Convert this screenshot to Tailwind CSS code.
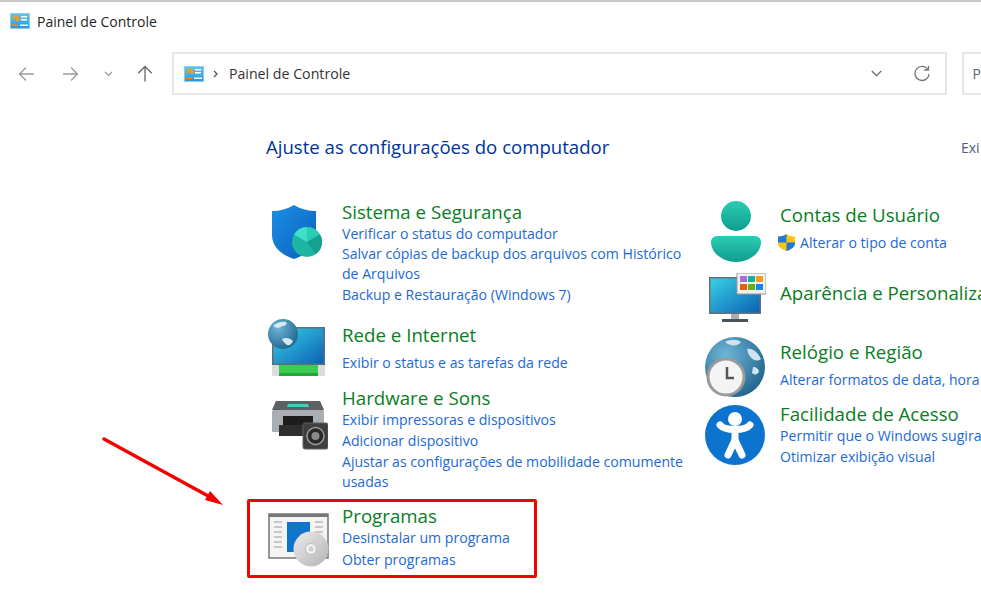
<!DOCTYPE html>
<html lang="pt-BR">
<head>
  <meta charset="UTF-8" />
  <title>Painel de Controle</title>
  <script src="https://cdn.jsdelivr.net/npm/@tailwindcss/browser@4"></script>
</head>
<body class="relative h-[598px] w-[981px] overflow-hidden bg-white font-['Open_Sans','Noto_Sans',sans-serif] text-[#1f1f1f]">

  <!-- hidden defs shared by the icons -->
  <svg width="0" height="0" class="absolute">
    <defs>
      <linearGradient id="cpBlue" x1="0" y1="0" x2="0" y2="1"><stop offset="0" stop-color="#5cc8f0"/><stop offset="1" stop-color="#2a94dc"/></linearGradient>
      <linearGradient id="shield" x1="0" y1="0" x2="1" y2="1"><stop offset="0" stop-color="#1b8fe6"/><stop offset="1" stop-color="#0a5fb8"/></linearGradient>
      <linearGradient id="screen" x1="0" y1="0" x2="1" y2="1"><stop offset="0" stop-color="#38d0e6"/><stop offset="1" stop-color="#0b62b4"/></linearGradient>
      <linearGradient id="teal" x1="0" y1="0" x2="0" y2="1"><stop offset="0" stop-color="#2bcdb4"/><stop offset="1" stop-color="#0f9c8e"/></linearGradient>
      <radialGradient id="globe" cx="0.35" cy="0.3" r="0.8"><stop offset="0" stop-color="#6fb6d8"/><stop offset="1" stop-color="#1d5f88"/></radialGradient>
      <linearGradient id="disc" x1="0" y1="0" x2="1" y2="1"><stop offset="0" stop-color="#ececec"/><stop offset="1" stop-color="#b4b4b4"/></linearGradient>
      <symbol id="cpIcon" viewBox="0 0 20 16">
        <rect x="0.5" y="0.5" width="19" height="15" fill="url(#cpBlue)" stroke="#8ccdee"/>
        <path d="M3 8a3.500 3.500 0 1 1 6 0H6V4.500z" fill="#f0a020"/>
        <rect x="11" y="3" width="6" height="1.500" fill="#fff"/>
        <rect x="11" y="6" width="6" height="1.500" fill="#fff"/>
        <rect x="2" y="11.500" width="6" height="1.500" fill="#f08a20"/>
        <rect x="10" y="11.500" width="8" height="1.500" fill="#fff"/>
      </symbol>
    </defs>
  </svg>

  <div class="h-[2px] bg-[#c8c8c8]"></div>

  <!-- title bar -->
  <div class="flex h-[38px] items-center gap-[7px] pl-[10px]">
    <svg class="h-[16px] w-[20px]"><use href="#cpIcon"/></svg>
    <span class="text-[14px]">Painel de Controle</span>
  </div>

  <!-- toolbar -->
  <div class="flex h-[43px] items-center mt-[12px]">
    <div class="flex w-[172px] items-center text-[#9a9a9a]">
      <svg class="ml-[18px] h-[16px] w-[17px]" viewBox="0 0 17 16" fill="none" stroke="currentColor" stroke-width="1.300"><path d="M16 8H1.500M8 1.500 1.500 8 8 14.500"/></svg>
      <svg class="ml-[27px] h-[16px] w-[17px]" viewBox="0 0 17 16" fill="none" stroke="currentColor" stroke-width="1.300"><path d="M1 8h14.500M9 1.500 15.500 8 9 14.500"/></svg>
      <svg class="ml-[25px] h-[6px] w-[9px]" viewBox="0 0 9 6" fill="none" stroke="currentColor" stroke-width="1.200"><path d="M1 1l3.500 3.500L8 1"/></svg>
      <svg class="ml-[24px] h-[17px] w-[16px] text-[#666]" viewBox="0 0 16 17" fill="none" stroke="currentColor" stroke-width="1.300"><path d="M8 16.500V1.500M1.200 8.300 8 1.500l6.800 6.800"/></svg>
    </div>
    <div class="flex h-[43px] w-[775px] items-center border-2 border-[#e6e6e6] pl-[10px]">
      <svg class="h-[16px] w-[20px]"><use href="#cpIcon"/></svg>
      <svg class="ml-[9px] h-[8px] w-[5px] text-[#555]" viewBox="0 0 5 8" fill="none" stroke="currentColor" stroke-width="1.300"><path d="M1 1l3 3-3 3"/></svg>
      <span class="ml-[11px] text-[14.200px] text-[#333]">Painel de Controle</span>
      <svg class="ml-auto h-[7px] w-[11px] text-[#666]" viewBox="0 0 11 7" fill="none" stroke="currentColor" stroke-width="1.200"><path d="M.8 1l4.700 4.700L10.200 1"/></svg>
      <svg class="ml-[32px] mr-[15px] h-[17px] w-[16px] text-[#777]" viewBox="0 0 16 17" fill="none" stroke="currentColor" stroke-width="1.300"><path d="M13.800 4.500A7 7 0 1 0 15 9M14.500 .8v4.200h-4.300"/></svg>
    </div>
    <div class="ml-[15px] flex h-[43px] flex-1 items-center border-y-2 border-l-2 border-[#e6e6e6] pl-[9px] text-[14px] text-[#666]">P</div>
  </div>

  <!-- page heading -->
  <div class="mt-[38px] flex h-[28px] items-center">
    <h1 class="ml-[266px] text-[18.600px] whitespace-nowrap text-[#003399]">Ajuste as configurações do computador</h1>
    <span class="ml-auto w-[20px] overflow-hidden text-[14px] text-[#4c5a80]">Exi</span>
  </div>

  <!-- categories -->
  <div class="mt-[40px] flex">
    <div class="ml-[266px] w-[439px] shrink-0">

      <div class="flex h-[122px]">
        <svg class="mt-[3px] ml-[4px] h-[56px] w-[52px] shrink-0" viewBox="0 0 52 56">
          <path d="M2 7C10 7 17 5 24 1c7 4 14 6 22 6v24C46 43 36 51 24 55 12 51 2 43 2 31z" fill="url(#shield)"/>
          <circle cx="37" cy="38" r="15" fill="#1fb5a4"/>
          <path d="M37 38V23a15 15 0 0 1 13 7.500z" fill="#2ccbb6"/>
          <path d="M37 38 24 30.500A15 15 0 0 1 37 23z" fill="#3fe0c8"/>
          <path d="M37 38 50 30.500A15 15 0 0 1 46 50z" fill="#16a08f"/>
        </svg>
        <div class="ml-[20px] -mt-[1px] text-[14.100px] leading-[21px] text-[#1c69d4]">
          <h2 class="text-[18.700px] leading-[23px] text-[#0a7d24]">Sistema e Segurança</h2>
          <p>Verificar o status do computador</p>
          <p class="w-[350px] leading-[20px]">Salvar cópias de backup dos arquivos com Histórico de Arquivos</p>
          <p>Backup e Restauração (Windows 7)</p>
        </div>
      </div>

      <div class="flex h-[63px]">
        <svg class="-mt-[4px] ml-[2px] h-[58px] w-[60px] shrink-0" viewBox="0 0 60 58">
          <rect x="4" y="8" width="53" height="38" fill="#5e6d78"/>
          <rect x="5.500" y="9.500" width="50" height="35" fill="url(#screen)"/>
          <rect x="4" y="46" width="53" height="11" fill="#dcdcdc"/>
          <rect x="11" y="46" width="39" height="11" fill="#3ecb52"/>
          <rect x="11" y="54" width="39" height="3" fill="#23a53a"/>
          <circle cx="15" cy="15" r="15" fill="url(#globe)"/>
          <path d="M5 7c3-3 8-5 13-4 2 2-1 4-4 4-2 2-5 3-9 0zM14 20c4-2 8-1 11 2-1 3-4 5-6 4-2-2-4-3-5-6z" fill="#d5e8f0"/>
        </svg>
        <div class="ml-[14px] text-[14.100px] leading-[21px] text-[#1c69d4]">
          <h2 class="mb-[6px] text-[18.700px] leading-[23px] text-[#0a7d24]">Rede e Internet</h2>
          <p>Exibir o status e as tarefas da rede</p>
        </div>
      </div>

      <div class="flex h-[114px]">
        <svg class="mt-[14px] ml-[2px] h-[50px] w-[60px] shrink-0" viewBox="0 0 60 50">
          <path d="M4 12 8 1h44l4 11v20H4z" fill="#a9aeb3"/>
          <path d="M8 1h44l4 9H4z" fill="#5c6064"/>
          <path d="M20 4h20l1 3H19z" fill="#3fcfc0"/>
          <rect x="15" y="16" width="30" height="9" fill="#1d1d1d"/>
          <rect x="11" y="25" width="28" height="11" fill="#2e2e2e"/>
          <rect x="35" y="23" width="25" height="26" rx="2" fill="#3f3f3f" stroke="#5e5e5e"/>
          <circle cx="47.500" cy="36" r="8.500" fill="#2a2a2a" stroke="#9a9a9a" stroke-width="1.500"/>
          <circle cx="47.500" cy="36" r="4" fill="#8a8a8a"/>
        </svg>
        <div class="ml-[14px] text-[14.100px] leading-[21px] text-[#1c69d4]">
          <h2 class="text-[18.700px] leading-[23px] text-[#0a7d24]">Hardware e Sons</h2>
          <p>Exibir impressoras e dispositivos</p>
          <p>Adicionar dispositivo</p>
          <p class="mt-[1px] w-[350px] leading-[20px]">Ajustar as configurações de mobilidade comumente usadas</p>
        </div>
      </div>

      <div class="flex pt-[4px]">
        <svg class="mt-[9px] ml-[2px] h-[54px] w-[62px] shrink-0" viewBox="0 0 62 54">
          <rect x="1" y="1" width="59" height="44" fill="#f4f4f4" stroke="#777" stroke-width="1.500"/>
          <rect x="1" y="1" width="59" height="3" fill="#777"/>
          <path d="M6 9h8M6 14h8M6 19h8M6 24h8M6 29h8M6 34h8M47 9h8M47 14h8M47 19h8" stroke="#999" stroke-width="1.200"/>
          <rect x="19" y="9" width="23" height="30" fill="#0f74cc"/>
          <circle cx="43" cy="36" r="17.500" fill="url(#disc)"/>
          <circle cx="43" cy="36" r="5.500" fill="#f2f2f2" stroke="#bbb"/>
          <circle cx="43" cy="36" r="2.500" fill="#cfcfcf"/>
        </svg>
        <div class="ml-[12px] text-[14.100px] leading-[22px] text-[#1c69d4]">
          <h2 class="text-[18.700px] leading-[23px] text-[#0a7d24]">Programas</h2>
          <p>Desinstalar um programa</p>
          <p>Obter programas</p>
        </div>
      </div>
    </div>

    <div class="min-w-0 flex-1 whitespace-nowrap">
      <div class="flex h-[69px]">
        <svg class="ml-[5px] h-[61px] w-[52px] shrink-0" viewBox="0 0 52 61">
          <circle cx="26" cy="15" r="15" fill="url(#teal)"/>
          <path d="M8 35h36c4 0 7 2 7 6 0 12-13 20-25 20S1 53 1 41c0-4 3-6 7-6z" fill="url(#teal)"/>
        </svg>
        <div class="ml-[18px] text-[14.100px] leading-[21px] text-[#1c69d4]">
          <h2 class="mt-[2px] mb-[6px] text-[18.700px] leading-[23px] text-[#0a7d24]">Contas de Usuário</h2>
          <p class="-ml-[2px] flex items-center gap-[5px]">
            <svg class="h-[17px] w-[17px]" viewBox="0 0 17 17"><path d="M8.500 0C11 2 14 2.500 17 2.500V9c0 4-4 6.500-8.500 8C4 15.500 0 13 0 9V2.500C3 2.500 6 2 8.500 0z" fill="#fcc419"/><path d="M8.500 0C6 2 3 2.500 0 2.500V8.500h8.500zM8.500 8.500V17C13 15.500 17 13 17 9v-.5z" fill="#1d7bd4"/></svg>
            Alterar o tipo de conta
          </p>
        </div>
      </div>
      <div class="flex h-[70px]">
        <svg class="ml-[4px] mt-[3px] h-[51px] w-[57px] shrink-0" viewBox="0 0 57 51">
          <rect x="0" y="4" width="52" height="37" fill="#667079"/>
          <rect x="1.500" y="5.500" width="49" height="34" fill="url(#screen)"/>
          <rect x="22" y="41" width="8" height="6" fill="#a9b1b7"/>
          <rect x="13" y="46" width="26" height="3" fill="#4c5358"/>
          <rect x="28" y="0" width="29" height="21" fill="#f2f2f2" stroke="#999"/>
          <rect x="31" y="3" width="7" height="6" fill="#a070d8"/><rect x="39" y="3" width="7" height="6" fill="#19b09a"/><rect x="47" y="3" width="7" height="6" fill="#f59a1c"/>
          <rect x="31" y="11" width="7" height="6" fill="#e85d14"/><rect x="39" y="11" width="7" height="6" fill="#62b01e"/><rect x="47" y="11" width="7" height="6" fill="#1a86e0"/>
        </svg>
        <h2 class="ml-[14px] mt-[11px] text-[18.700px] leading-[23px] text-[#0a7d24]">Aparência e Personaliza</h2>
      </div>
      <div class="flex h-[63px]">
        <svg class="-mt-[3px] h-[60px] w-[60px] shrink-0" viewBox="0 0 60 60">
          <circle cx="30" cy="30" r="30" fill="url(#globe)"/>
          <path d="M20 5c5-3 12-3 16 0-3 4-10 5-16 0zM42 12c5-1 11 3 14 10-5 4-12 0-14-10zM48 30c3 0 6 2 6 5-2 3-5 3-7 1z" fill="#cfe4ee"/>
          <circle cx="21" cy="40" r="18" fill="#f4f4f4" stroke="#9a9a9a" stroke-width="3"/>
          <path d="M22 30v11h7" fill="none" stroke="#555" stroke-width="2.500"/>
        </svg>
        <div class="ml-[15px] text-[14.100px] leading-[21px] text-[#1c69d4]">
          <h2 class="mb-[6px] text-[18.700px] leading-[23px] text-[#0a7d24]">Relógio e Região</h2>
          <p>Alterar formatos de data, hora</p>
        </div>
      </div>
      <div class="flex">
        <svg class="mt-[2px] h-[60px] w-[60px] shrink-0" viewBox="0 0 60 60">
          <circle cx="30" cy="30" r="30" fill="#0c74cf"/>
          <circle cx="30" cy="14" r="7" fill="#fff"/>
          <path d="M15 20C20 26 40 26 45 20M30 26V37" fill="none" stroke="#fff" stroke-width="7" stroke-linecap="round"/>
          <path d="M30 35 23 50M30 35 37 50" fill="none" stroke="#fff" stroke-width="7" stroke-linecap="round"/>
        </svg>
        <div class="ml-[15px] -mt-[1px] text-[14.100px] leading-[21px] text-[#1c69d4]">
          <h2 class="text-[18.700px] leading-[23px] text-[#0a7d24]">Facilidade de Acesso</h2>
          <p>Permitir que o Windows sugira</p>
          <p>Otimizar exibição visual</p>
        </div>
      </div>
    </div>
  </div>

  <!-- annotation drawn over the screenshot -->
  <div class="absolute left-[247px] top-[499px] h-[79px] w-[290px] rounded-[2px] border-[3px] border-[#f50000]"></div>
  <svg class="absolute left-[100px] top-[435px] h-[75px] w-[130px]" viewBox="0 0 130 75">
    <path d="M4 4 110 62" stroke="#f50000" stroke-width="3.500" stroke-linecap="round"/>
    <path d="M123 70 105 65 110 56z" fill="#f50000"/>
  </svg>
</body>
</html>
